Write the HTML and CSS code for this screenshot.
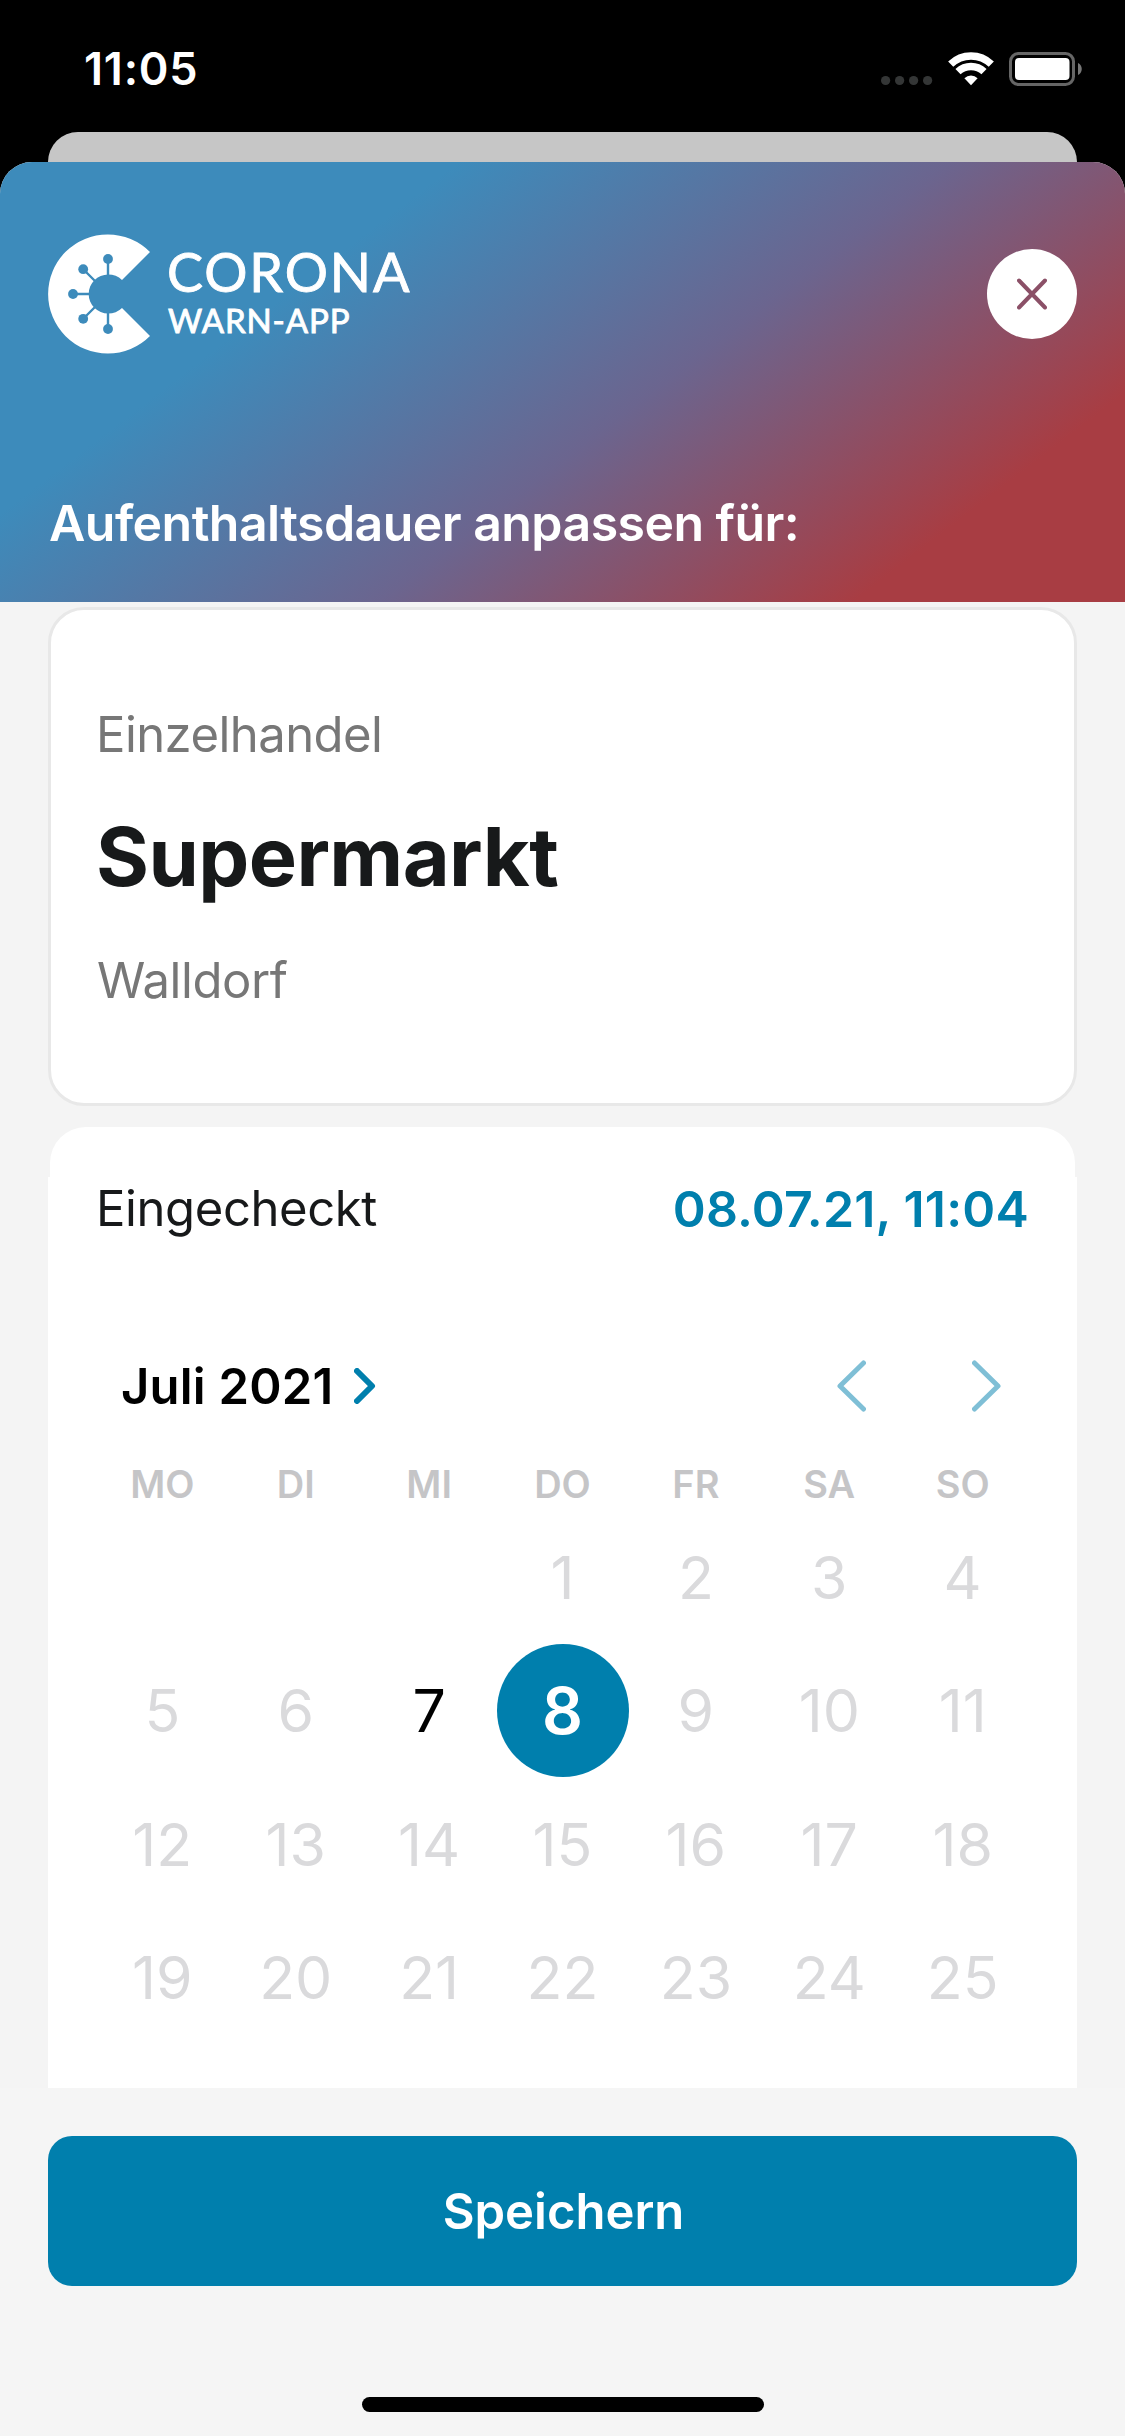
FILE: index.html
```html
<!DOCTYPE html>
<html lang="de">
<head>
<meta charset="utf-8">
<title>Corona-Warn-App</title>
<link rel="stylesheet" href="styles.css">
</head>
<body>
<div class="status-bar">
  <span class="time">11:05</span>
  <div class="status-icons">
    <svg class="signal" width="52" height="34" viewBox="0 0 52 34" fill="#343636"><circle cx="4.6" cy="28.5" r="4.6"/><circle cx="18.6" cy="28.5" r="4.6"/><circle cx="32.6" cy="28.5" r="4.6"/><circle cx="46.6" cy="28.5" r="4.6"/></svg>
    <svg class="wifi" width="48" height="34" viewBox="0 0 48 34"><g fill="none" stroke="#fff" stroke-width="7.4"><path d="M3.7 12.2a29.2 29.2 0 0 1 40.6 0"/><path d="M11 19.7a18.7 18.7 0 0 1 26 0"/></g><path d="M24 33.2 17.4 26.2a9.6 9.6 0 0 1 13.2 0Z" fill="#fff"/></svg>
    <svg class="battery" width="74" height="34" viewBox="0 0 74 34"><rect x="1.5" y="1.5" width="63" height="31" rx="8" fill="none" stroke="#666" stroke-width="3"/><rect x="6" y="6" width="54.500" height="22" rx="4" fill="#fff"/><path d="M69 11c5 2 5 10 0 12Z" fill="#777"/></svg>
  </div>
</div>
<div class="back-card"></div>
<main class="sheet">
  <header class="header">
    <div class="brand-row">
      <div class="brand">
        <svg width="104" height="120" viewBox="-60 -60 104 120">
          <path d="M42 -42A59.600 59.600 0 1 0 42 42L14 14A19.600 19.600 0 1 1 14 -14Z" fill="#fff"/>
          <g stroke="#3d8bbb" stroke-width="2.400"><path d="M0-18V-35M0 18V35M-18 0H-35M-13-13-25-25M-13 13-25 25"/></g>
          <g fill="#3d8bbb"><circle cy="-35" r="4.900"/><circle cy="35" r="4.900"/><circle cx="-35" r="4.900"/><circle cx="-24.800" cy="-24.800" r="4.900"/><circle cx="-24.800" cy="24.800" r="4.900"/></g>
        </svg>
        <div class="wordmark"><span class="word-top">CORONA</span><span class="word-bottom">WARN-APP</span></div>
      </div>
      <button class="close" aria-label="Schließen"><svg width="30" height="32" viewBox="0 0 30 32" fill="none" stroke="#8b5067" stroke-width="4" stroke-linecap="round"><path d="M2 2.500 28 29.500M28 2.500 2 29.500"/></svg></button>
    </div>
    <h1 class="title">Aufenthaltsdauer anpassen für:</h1>
  </header>
  <div class="content">
    <section class="place">
      <p class="place-meta">Einzelhandel</p>
      <h2 class="place-name">Supermarkt</h2>
      <p class="place-meta place-city">Walldorf</p>
    </section>
    <section class="checkin">
      <div class="checkin-cap"></div>
      <div class="checkin-body">
        <div class="checkin-row"><span class="label">Eingecheckt</span><span class="date">08.07.21, 11:04</span></div>
        <div class="month-row">
          <span class="month">Juli 2021</span>
          <svg class="month-arrow" width="22" height="36" viewBox="0 0 22 36" fill="none" stroke="#007fad" stroke-width="6" stroke-linecap="round" stroke-linejoin="round"><path d="M3 3 18 18 3 33"/></svg>
          <div class="month-nav">
            <svg width="29" height="52" viewBox="0 0 29 52"><path d="M26.500 3 3 26 26.500 49"/></svg>
            <svg width="29" height="52" viewBox="0 0 29 52"><path d="M2.500 3 26 26 2.500 49"/></svg>
          </div>
        </div>
        <div class="weekdays"><span>MO</span><span>DI</span><span>MI</span><span>DO</span><span>FR</span><span>SA</span><span>SO</span></div>
        <div class="days">
          <span></span><span></span><span></span><span>1</span><span>2</span><span>3</span><span>4</span>
          <span>5</span><span>6</span><span class="enabled">7</span><span class="selected">8</span><span>9</span><span>10</span><span>11</span>
          <span>12</span><span>13</span><span>14</span><span>15</span><span>16</span><span>17</span><span>18</span>
          <span>19</span><span>20</span><span>21</span><span>22</span><span>23</span><span>24</span><span>25</span>
        </div>
      </div>
    </section>
  </div>
  <footer class="footer">
    <button class="save">Speichern</button>
    <div class="home-indicator"></div>
  </footer>
</main>
</body>
</html>
```
FILE: styles.css
```css
* { box-sizing: border-box; }
body {
  margin: 0;
  width: 1125px;
  height: 2436px;
  overflow: hidden;
  background: #000;
  font-family: Inter, "Liberation Sans", sans-serif;
  display: flex;
  flex-direction: column;
}
h1, h2, p { margin: 0; }
button { border: 0; padding: 0; font-family: inherit; }
svg { display: block; flex: none; }

.status-bar {
  height: 132px;
  padding: 52px 42px 0 84px;
  display: flex;
  justify-content: space-between;
  align-items: flex-start;
  flex: none;
}
.time { color: #fff; font-size: 45px; font-weight: 600; line-height: 34px; letter-spacing: 0.8px; }
.status-icons { display: flex; }
.wifi { margin-left: 14px; }
.battery { margin-left: 14px; }

.back-card {
  height: 30px;
  margin: 0 48px;
  border-radius: 30px 30px 0 0;
  background: #c6c6c6;
  flex: none;
}
.sheet {
  flex: 1;
  min-height: 0;
  background: #f4f4f4;
  border-radius: 32px 32px 0 0;
  overflow: hidden;
  display: flex;
  flex-direction: column;
}
.header {
  height: 440px;
  padding: 72px 48px 0;
  background: linear-gradient(142.5deg, #3d8bbb 27%, #6b658f 56%, #a83d43 84%);
  color: #fff;
  flex: none;
}
.brand-row { display: flex; justify-content: space-between; align-items: center; }
.brand { display: flex; gap: 15px; }
.wordmark {
  display: flex;
  flex-direction: column;
  padding-top: 17px;
  font-family: Lato, sans-serif;
  -webkit-text-stroke: 0.9px #fff;
}
.word-top { font-size: 54px; line-height: 41px; letter-spacing: 1.9px; }
.word-bottom { font-size: 33px; line-height: 26px; letter-spacing: 0.9px; margin: 15px 0 0 1px; }
.close {
  width: 90px;
  height: 90px;
  border-radius: 50%;
  background: #fff;
  display: flex;
  align-items: center;
  justify-content: center;
}
.title { font-size: 50px; font-weight: 600; line-height: 60px; letter-spacing: -0.55px; margin: 139px 0 0 1px; }

.content { padding: 5px 48px 0; height: 1486px; flex: none; }
.place {
  height: 499px;
  border: 3px solid #e8e8e8;
  border-radius: 36px;
  background: #fff;
  padding: 95px 45px 0;
}
.place-meta { color: #777; font-size: 49px; line-height: 60px; letter-spacing: -0.55px; }
.place-city { letter-spacing: -0.4px; padding-left: 1px; }
.place-name { color: #17191a; font-size: 81px; font-weight: 700; line-height: 100px; letter-spacing: -0.6px; margin: 42px 0 44px; }

.checkin { margin-top: 21px; }
.checkin-cap { height: 50px; margin: 0 2px; background: #fff; border-radius: 36px 36px 0 0; }
.checkin-body { height: 911px; background: #fff; padding: 2px 48px 0; }
.checkin-row { display: flex; justify-content: space-between; font-size: 49px; line-height: 60px; }
.label { color: #17191a; letter-spacing: -0.4px; }
.date { color: #007fad; font-size: 50px; font-weight: 600; letter-spacing: 0.2px; }
.month-row { display: flex; align-items: center; height: 60px; margin-top: 117px; padding: 0 28px 0 25px; }
.month { color: #000; font-size: 49px; font-weight: 600; line-height: 60px; letter-spacing: 0.2px; padding-top: 2px; }
.month-arrow { margin-left: 21px; }
.month-nav { margin-left: auto; display: flex; gap: 106px; fill: none; stroke: #7fbfd6; stroke-width: 5; stroke-linecap: round; stroke-linejoin: round; }
.weekdays, .days { display: grid; grid-template-columns: repeat(7, 133.4px); text-align: center; justify-content: center; }
.weekdays { margin-top: 46px; color: #c5c5c7; font-size: 38px; font-weight: 600; line-height: 44px; }
.days { grid-auto-rows: 133.3px; margin-top: 5px; color: #dadadc; font-size: 59px; line-height: 133px; }
.days .enabled { color: #000; }
.days .selected {
  width: 132px;
  height: 133px;
  justify-self: center;
  background: #007fad;
  color: #fff;
  border-radius: 50%;
  font-size: 64px;
  font-weight: 600;
}

.footer { display: flex; flex-direction: column; align-items: center; padding: 48px 48px 0; background: #f5f5f5; flex: 1; }
.save { width: 100%; height: 150px; padding-left: 2px; border-radius: 24px; background: #007fad; color: #fff; font-size: 49px; font-weight: 600; flex: none; }
.home-indicator { width: 402px; height: 15px; border-radius: 8px; background: #000; margin-top: 111px; flex: none; }
```
